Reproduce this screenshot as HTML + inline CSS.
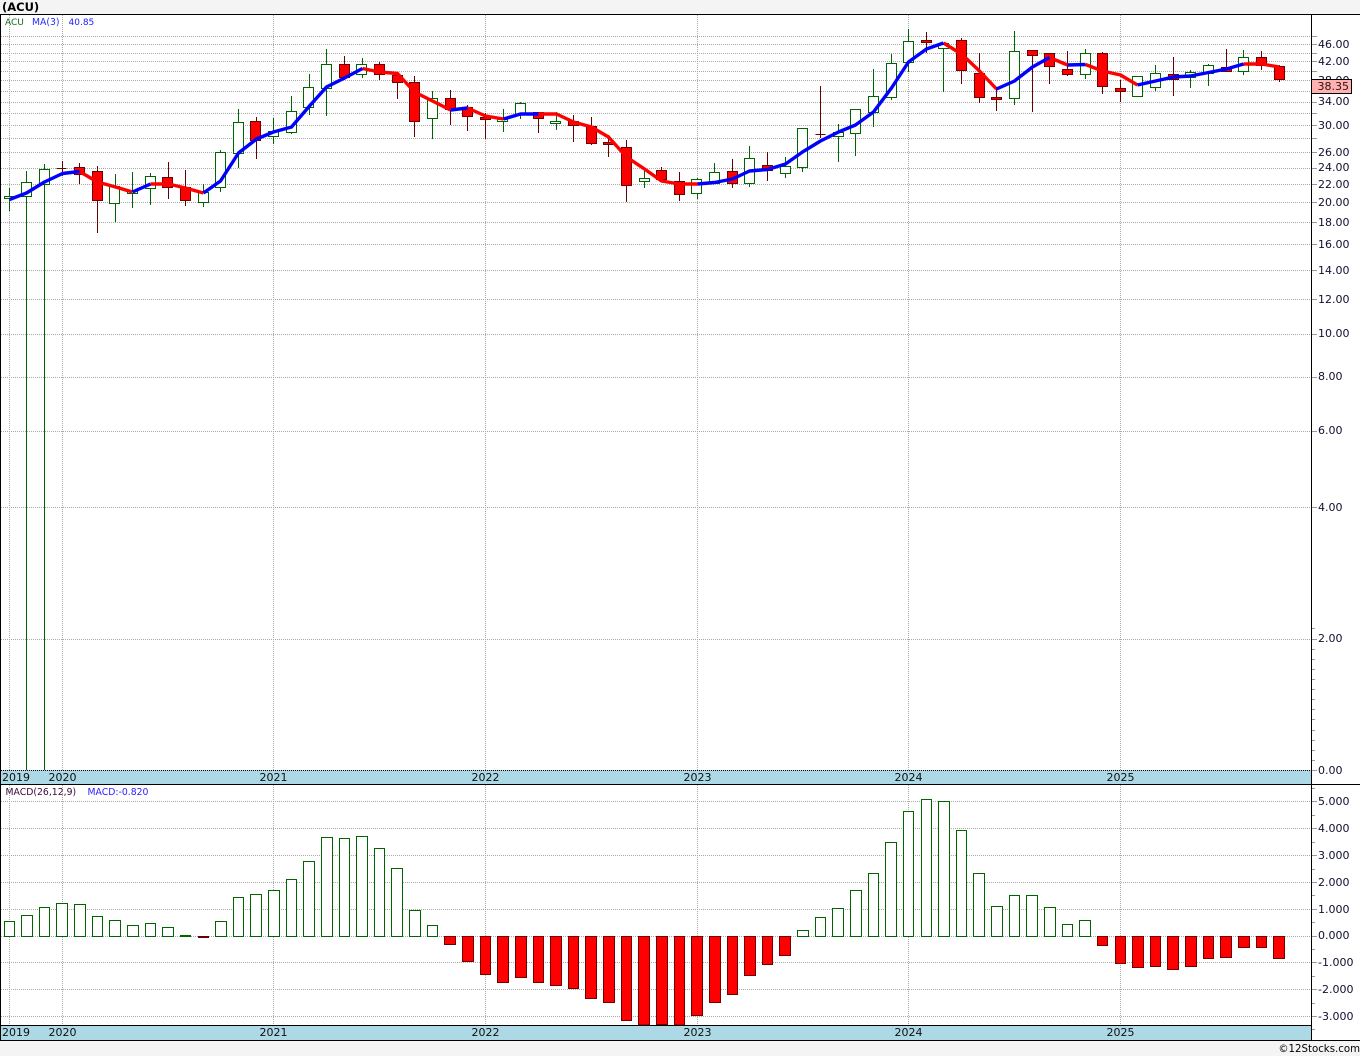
<!DOCTYPE html>
<html>
<head>
<meta charset="utf-8">
<title>ACU</title>
<style>
html,body{margin:0;padding:0;background:#f4f4f4;}
svg{display:block;}
text{font-family:"DejaVu Sans","Liberation Sans",sans-serif;}
.a{font-size:11px;fill:#101030;}
.y{font-size:11px;fill:#101010;}
</style>
</head>
<body>
<svg width="1360" height="1056" viewBox="0 0 1360 1056" xmlns="http://www.w3.org/2000/svg">
<rect x="0" y="0" width="1360" height="1056" fill="#f4f4f4"/>
<rect x="0" y="14" width="1360" height="1027" fill="#fff"/>
<rect x="1" y="770" width="1310" height="14" fill="#add8e6"/>
<rect x="1" y="1026" width="1310" height="14" fill="#add8e6"/>

<g shape-rendering="crispEdges">
<!-- grid -->
<path fill="none" stroke="#a8a8a8" stroke-width="1" stroke-dasharray="1 1" d="M1 36.5H1311M1 44.5H1311M1 53.5H1311M1 61.5H1311M1 71.5H1311M1 80.5H1311M1 91.5H1311M1 102.5H1311M1 113.5H1311M1 125.5H1311M1 138.5H1311M1 152.5H1311M1 168.5H1311M1 184.5H1311M1 202.5H1311M1 222.5H1311M1 244.5H1311M1 270.5H1311M1 299.5H1311M1 334.5H1311M1 377.5H1311M1 431.5H1311M1 507.5H1311M1 639.5H1311M1 801.5H1311M1 828.5H1311M1 855.5H1311M1 882.5H1311M1 909.5H1311M1 936.5H1311M1 962.5H1311M1 989.5H1311M1 1016.5H1311M9.5 15V770M62.5 15V770M273.5 15V770M485.5 15V770M697.5 15V770M908.5 15V770M1120.5 15V770M9.5 785V1025M62.5 785V1025M273.5 785V1025M485.5 785V1025M697.5 785V1025M908.5 785V1025M1120.5 785V1025"/>
<!-- ticks -->
<path fill="none" stroke="#999" stroke-width="1" d="M1311 36.5H1317M1311 44.5H1317M1311 53.5H1317M1311 61.5H1317M1311 71.5H1317M1311 80.5H1317M1311 91.5H1317M1311 102.5H1317M1311 113.5H1317M1311 125.5H1317M1311 138.5H1317M1311 152.5H1317M1311 168.5H1317M1311 184.5H1317M1311 202.5H1317M1311 222.5H1317M1311 244.5H1317M1311 270.5H1317M1311 299.5H1317M1311 334.5H1317M1311 377.5H1317M1311 431.5H1317M1311 507.5H1317M1311 639.5H1317M1311 770.5H1317M1311 628.5H1315M1311 649.5H1315M1311 659.5H1315M1311 669.5H1315M1311 679.5H1315M1311 689.5H1315M1311 699.5H1315M1311 709.5H1315M1311 719.5H1315M1311 730.5H1315M1311 740.5H1315M1311 750.5H1315M1311 760.5H1315M1311 801.5H1317M1311 828.5H1317M1311 855.5H1317M1311 882.5H1317M1311 909.5H1317M1311 936.5H1317M1311 962.5H1317M1311 989.5H1317M1311 1016.5H1317M1311 788.5H1315M1311 815.5H1315M1311 842.5H1315M1311 869.5H1315M1311 895.5H1315M1311 922.5H1315M1311 949.5H1315M1311 976.5H1315M1311 1003.5H1315M1311 1029.5H1315"/>

<!-- wicks -->
<path fill="none" stroke="#006400" stroke-width="1" d="M9.5 188V211M26.5 171V770M44.5 164V770M115.5 174V222M132.5 172V208M150.5 173V205M203.5 184V207M220.5 150V192M238.5 109V168M273.5 118V144M291.5 96V134M309.5 74V115M326.5 49V116M362.5 58V78M432.5 91V139M503.5 109V132M520.5 102V119M556.5 112V130M644.5 171V188M697.5 178V199M714.5 163V183M749.5 146V187M785.5 157V178M802.5 128V172M838.5 124V162M855.5 109V156M873.5 69V127M891.5 54V100M908.5 29V72M943.5 43V92M1014.5 31V105M1085.5 49V79M1155.5 65V91M1190.5 70V88M1208.5 64V86M1243.5 50V75"/>
<path fill="none" stroke="#640000" stroke-width="1" d="M62.5 161V176M79.5 163V184M97.5 166V233M168.5 162V199M185.5 170V206M256.5 117V159M344.5 56V80M379.5 62V80M397.5 73V99M414.5 76V137M450.5 90V125M467.5 105V131M485.5 113V139M538.5 112V133M573.5 115V142M591.5 117V145M608.5 135V157M626.5 140V202M661.5 167V180M679.5 172V201M732.5 159V188M767.5 152V181M820.5 86V138M926.5 32V53M961.5 38V84M979.5 53V103M996.5 87V111M1032.5 50V112M1049.5 53V84M1067.5 51V76M1102.5 52V94M1120.5 80V102M1173.5 57V96M1226.5 49V72M1261.5 51V70M1279.5 65V82"/>

<!-- bodies -->
<path fill="#fff" stroke="#006400" stroke-width="1" d="M4.5 196.5h10v2h-10zM21.5 182.5h10v14h-10zM39.5 169.5h10v15h-10zM109.5 186.5h10v17h-10zM127.5 190.5h10v3h-10zM145.5 176.5h10v12h-10zM198.5 192.5h10v10h-10zM215.5 152.5h10v35h-10zM233.5 122.5h10v31h-10zM268.5 131.5h10v5h-10zM286.5 111.5h10v21h-10zM303.5 87.5h10v20h-10zM321.5 64.5h10v24h-10zM356.5 64.5h10v10h-10zM427.5 98.5h10v20h-10zM497.5 119.5h10v2h-10zM515.5 103.5h10v11h-10zM550.5 121.5h10v2h-10zM639.5 178.5h10v3h-10zM691.5 179.5h10v14h-10zM709.5 172.5h10v11h-10zM744.5 158.5h10v25h-10zM780.5 166.5h10v7h-10zM797.5 128.5h10v39h-10zM833.5 132.5h10v4h-10zM850.5 109.5h10v24h-10zM868.5 96.5h10v16h-10zM886.5 63.5h10v34h-10zM903.5 41.5h10v21h-10zM938.5 43.5h10v5h-10zM1009.5 51.5h10v47h-10zM1080.5 53.5h10v21h-10zM1132.5 76.5h10v20h-10zM1150.5 73.5h10v14h-10zM1185.5 72.5h10v5h-10zM1203.5 65.5h10v8h-10zM1238.5 57.5h10v14h-10z"/>
<path fill="#f00" stroke="#700000" stroke-width="1" d="M56.5 168.5h10M74.5 167.5h10v7h-10zM92.5 171.5h10v29h-10zM162.5 177.5h10v10h-10zM180.5 187.5h10v13h-10zM250.5 121.5h10v19h-10zM339.5 64.5h10v13h-10zM374.5 64.5h10v10h-10zM392.5 75.5h10v7h-10zM409.5 82.5h10v39h-10zM445.5 98.5h10v11h-10zM462.5 107.5h10v9h-10zM480.5 117.5h10v2h-10zM533.5 112.5h10v6h-10zM568.5 121.5h10v4h-10zM586.5 126.5h10v17h-10zM603.5 142.5h10v2h-10zM621.5 147.5h10v38h-10zM656.5 170.5h10v9h-10zM674.5 181.5h10v13h-10zM727.5 171.5h10v12h-10zM762.5 165.5h10v5h-10zM815.5 134.5h10M921.5 40.5h10v2h-10zM956.5 40.5h10v30h-10zM974.5 73.5h10v24h-10zM991.5 97.5h10v2h-10zM1027.5 50.5h10v5h-10zM1044.5 53.5h10v13h-10zM1062.5 69.5h10v5h-10zM1097.5 53.5h10v33h-10zM1115.5 88.5h10v3h-10zM1168.5 74.5h10v5h-10zM1221.5 67.5h10v4h-10zM1256.5 57.5h10v8h-10zM1274.5 66.5h10v13h-10z"/>

<!-- MACD bars -->
<path fill="#fff" stroke="#006400" stroke-width="1" d="M4.5 921.5h10v15h-10zM21.5 915.5h11v21h-11zM39.5 907.5h10v29h-10zM56.5 903.5h11v33h-11zM74.5 904.5h11v32h-11zM92.5 916.5h10v20h-10zM109.5 920.5h11v16h-11zM127.5 925.5h11v11h-11zM145.5 923.5h10v13h-10zM162.5 927.5h11v9h-11zM215.5 921.5h11v15h-11zM233.5 897.5h10v39h-10zM250.5 894.5h11v42h-11zM268.5 890.5h11v46h-11zM286.5 879.5h10v57h-10zM303.5 861.5h11v75h-11zM321.5 837.5h11v99h-11zM339.5 838.5h10v98h-10zM356.5 836.5h11v100h-11zM374.5 848.5h10v88h-10zM391.5 868.5h11v68h-11zM409.5 910.5h11v26h-11zM427.5 925.5h10v11h-10zM797.5 930.5h11v6h-11zM815.5 917.5h10v19h-10zM832.5 908.5h11v28h-11zM850.5 890.5h11v46h-11zM868.5 873.5h10v63h-10zM885.5 842.5h11v94h-11zM903.5 811.5h10v125h-10zM921.5 799.5h10v137h-10zM938.5 801.5h11v135h-11zM956.5 830.5h10v106h-10zM973.5 873.5h11v63h-11zM991.5 906.5h11v30h-11zM1009.5 895.5h10v41h-10zM1026.5 895.5h11v41h-11zM1044.5 907.5h11v29h-11zM1062.5 924.5h10v12h-10zM1079.5 920.5h11v16h-11z"/>
<path fill="#f00" stroke="#700000" stroke-width="1" d="M444.5 936.5h11v8h-11zM462.5 936.5h11v25h-11zM480.5 936.5h10v38h-10zM497.5 936.5h11v46h-11zM515.5 936.5h11v41h-11zM533.5 936.5h10v46h-10zM550.5 936.5h11v49h-11zM568.5 936.5h10v52h-10zM585.5 936.5h11v62h-11zM603.5 936.5h11v66h-11zM621.5 936.5h10v84h-10zM638.5 936.5h11v88.5h-11zM656.5 936.5h11v88h-11zM674.5 936.5h10v88.5h-10zM691.5 936.5h11v79h-11zM709.5 936.5h11v66h-11zM727.5 936.5h10v58h-10zM744.5 936.5h11v39h-11zM762.5 936.5h10v28h-10zM779.5 936.5h11v19h-11zM1097.5 936.5h10v9h-10zM1115.5 936.5h10v27h-10zM1132.5 936.5h11v31h-11zM1150.5 936.5h10v30h-10zM1167.5 936.5h11v33h-11zM1185.5 936.5h11v30h-11zM1203.5 936.5h10v22h-10zM1220.5 936.5h11v21h-11zM1238.5 936.5h11v11h-11zM1256.5 936.5h10v11h-10zM1273.5 936.5h11v22h-11z"/>
<rect x="180" y="935" width="11" height="2" fill="#006400"/>
<rect x="198" y="936" width="11" height="2" fill="#640000"/>

<!-- frame -->
<path fill="none" stroke="#000" stroke-width="1" d="M0 14.5H1360M0.5 14V1041M1311.5 14V1040M0 784.5H1360M0 1025.5H1311M0 1040.5H1360"/>
<path fill="none" stroke="#000" stroke-width="1" stroke-dasharray="1 1" d="M1 770.5H1311"/>
</g>

<!-- MA line -->
<g fill="none" stroke-width="3.4" stroke-linejoin="round" stroke-linecap="butt">
<path stroke="#f00" d="M79.5 171.5L97.5 182L115.5 187L132.5 192M150.5 184L168.5 184L185.5 188L203.5 193M362.5 68.5L379.5 72L397.5 73.5L414.5 92L432.5 101L450.5 110M467.5 108L485.5 116L503.5 119M538.5 114L556.5 114L573.5 122L591.5 127L608.5 137L626.5 157L644.5 169L661.5 181L679.5 184L697.5 184M943.5 43L961.5 54L979.5 71L996.5 89M1049.5 57.5L1067.5 65M1085.5 64.5L1102.5 71L1120.5 75L1137.5 85M1243.5 64L1261.5 64L1279.5 67"/>
<path stroke="#00f" d="M9.5 199.5L26.5 193L44.5 182L62.5 173.5L79.5 171.5M132.5 192L150.5 184M203.5 193L220.5 181L238.5 153L256.5 139L273.5 132L291.5 127L309.5 106L326.5 87L344.5 78L362.5 68.5M450.5 110L467.5 108M503.5 119L520.5 114L538.5 114M697.5 184L714.5 182.5L732.5 179L749.5 171L767.5 169.5L785.5 164L802.5 152L820.5 141L838.5 132L855.5 125L873.5 112L891.5 88L908.5 62L926.5 49L943.5 43M996.5 89L1014.5 81L1032.5 67L1049.5 57.5M1067.5 65L1085.5 64.5M1137.5 85L1155.5 81L1173.5 77L1190.5 76L1208.5 72.5L1226.5 69L1243.5 64"/>
</g>

<!-- labels -->
<text x="2" y="11" font-size="11.5" font-weight="bold" fill="#000">(ACU)</text>
<text x="5" y="25" font-size="9" fill="#1a6a1a">ACU</text>
<text x="32" y="25" font-size="9.3" fill="#2a2aff">MA(3)</text>
<text x="68.5" y="25" font-size="9" fill="#2020ff">40.85</text>
<text x="5.5" y="795" font-size="9.3" fill="#3a0a3a">MACD(26,12,9)</text>
<text x="87.5" y="795" font-size="9.3" fill="#3020ff">MACD:-0.820</text>

<text class="a" x="1318" y="48">46.00</text>
<text class="a" x="1318" y="65">42.00</text>
<text class="a" x="1318" y="84">38.00</text>
<text class="a" x="1318" y="105">34.00</text>
<text class="a" x="1318" y="129">30.00</text>
<text class="a" x="1318" y="156">26.00</text>
<text class="a" x="1318" y="171">24.00</text>
<text class="a" x="1318" y="188">22.00</text>
<text class="a" x="1318" y="206">20.00</text>
<text class="a" x="1318" y="226">18.00</text>
<text class="a" x="1318" y="248">16.00</text>
<text class="a" x="1318" y="274">14.00</text>
<text class="a" x="1318" y="303">12.00</text>
<text class="a" x="1318" y="337">10.00</text>
<text class="a" x="1318" y="380">8.00</text>
<text class="a" x="1318" y="434">6.00</text>
<text class="a" x="1318" y="511">4.00</text>
<text class="a" x="1318" y="642">2.00</text>
<text class="a" x="1318" y="774">0.00</text>

<rect x="1311.5" y="79.5" width="40" height="14" fill="#ffb0b0" stroke="#000" shape-rendering="crispEdges"/>
<text class="a" x="1317.5" y="90" style="fill:#301010">38.35</text>

<text class="a" x="1318" y="805">5.000</text>
<text class="a" x="1318" y="832">4.000</text>
<text class="a" x="1318" y="859">3.000</text>
<text class="a" x="1318" y="886">2.000</text>
<text class="a" x="1318" y="913">1.000</text>
<text class="a" x="1318" y="939">0.000</text>
<text class="a" x="1318" y="966">-1.000</text>
<text class="a" x="1318" y="993">-2.000</text>
<text class="a" x="1318" y="1020">-3.000</text>

<text class="y" x="2" y="781">2019</text>
<text class="y" x="48.5" y="781">2020</text>
<text class="y" x="259.5" y="781">2021</text>
<text class="y" x="471.5" y="781">2022</text>
<text class="y" x="683.5" y="781">2023</text>
<text class="y" x="894.5" y="781">2024</text>
<text class="y" x="1106.5" y="781">2025</text>
<text class="y" x="2" y="1036">2019</text>
<text class="y" x="48.5" y="1036">2020</text>
<text class="y" x="259.5" y="1036">2021</text>
<text class="y" x="471.5" y="1036">2022</text>
<text class="y" x="683.5" y="1036">2023</text>
<text class="y" x="894.5" y="1036">2024</text>
<text class="y" x="1106.5" y="1036">2025</text>

<text x="1360" y="1052" text-anchor="end" font-size="10.2" fill="#000">©12Stocks.com</text>
</svg>
</body>
</html>
